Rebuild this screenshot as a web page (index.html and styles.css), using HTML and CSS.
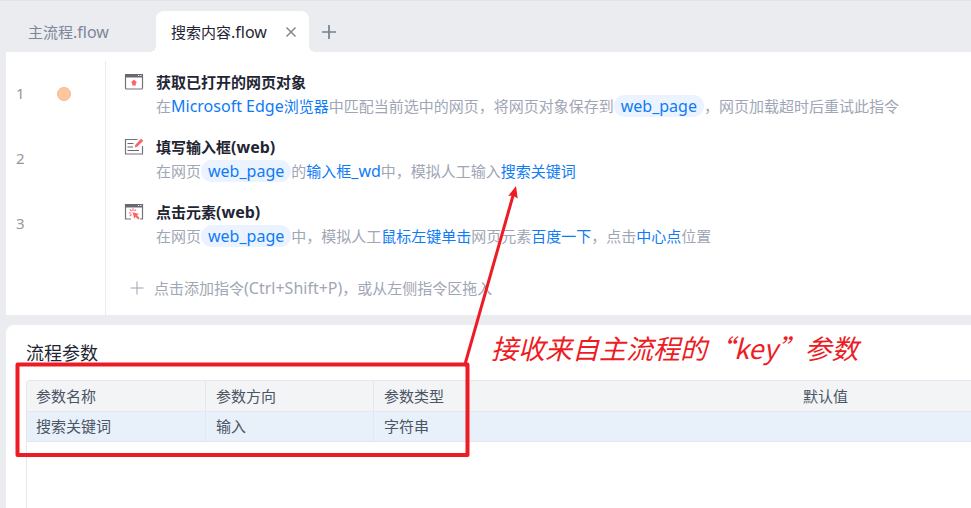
FILE: index.html
```html
<!DOCTYPE html>
<html lang="zh-CN">
<head>
  <meta charset="UTF-8" />
  <meta name="viewport" content="width=device-width, initial-scale=1.0" />
  <title>搜索内容.flow</title>
  <link rel="stylesheet" href="styles.css">
</head>
<body>

  <!-- Tabs -->
  <nav class="tabs">
    <a class="tab" href="#main">主流程<span class="latin">.flow</span></a>
    <div class="tab active">
      <a href="#search">搜索内容<span class="latin">.flow</span></a>
      <button type="button" class="icon-button" aria-label="关闭">
        <svg width="12" height="12" viewBox="0 0 12 12"><path d="M1.5 1.5L10.5 10.5M10.5 1.5L1.5 10.5" stroke="#7c7f86" stroke-width="1.4" /></svg>
      </button>
    </div>
    <button type="button" class="icon-button add-tab" aria-label="新建">
      <svg width="16" height="16" viewBox="0 0 16 16"><path d="M8 1V15M1 8H15" stroke="#747f91" stroke-width="1.7" /></svg>
    </button>
  </nav>

  <!-- Flow steps -->
  <main class="editor">
    <div class="gutter">
      <div class="line"><span class="number">1</span><span class="breakpoint"></span></div>
      <div class="line"><span class="number">2</span></div>
      <div class="line"><span class="number">3</span></div>
    </div>

    <div class="steps">
      <section class="step">
        <svg class="step-icon" width="20" height="18" viewBox="0 0 20 18">
          <rect x="1.5" y="1.5" width="17" height="14.5" rx="1" fill="#fff" stroke="#74747c" stroke-width="1.2" />
          <path d="M1 1H19V4.5H1Z" fill="#686871" />
          <path d="M14 2.5H15.2M16.3 2.5H17.5" stroke="#fff" stroke-width="1.2" />
          <path d="M10 6.5L13.2 9.7H11.8V12.6H8.2V9.7H6.8Z" fill="#f96468" />
        </svg>
        <div class="step-text">
          <h2>获取已打开的网页对象</h2>
          <p>在<a href="#browser"><span class="latin">Microsoft Edge</span>浏览器</a>中匹配当前选中的网页，将网页对象保存到<a class="variable latin" href="#web_page">web_page</a>，网页加载超时后重试此指令</p>
        </div>
      </section>

      <section class="step">
        <svg class="step-icon" width="20" height="18" viewBox="0 0 20 18">
          <path d="M13.5 1.5H1.5V16H18.5V8" fill="none" stroke="#74747c" stroke-width="1.2" />
          <path d="M3.5 5.5H9.5M3.5 9H9M3.5 12.5H15" stroke="#686871" stroke-width="1.2" />
          <path d="M17 0.8L19.3 2.7L13.5 8.6L10.8 9.5L11.4 6.8Z" fill="#f96468" />
        </svg>
        <div class="step-text">
          <h2>填写输入框<span class="latin">(web)</span></h2>
          <p>在网页<a class="variable latin" href="#web_page">web_page</a>的<a href="#input">输入框<span class="latin">_wd</span></a>中，模拟人工输入<a href="#keyword">搜索关键词</a></p>
        </div>
      </section>

      <section class="step">
        <svg class="step-icon" width="20" height="18" viewBox="0 0 20 18">
          <path d="M7 16H1.5V1.5H18.5V16H16" fill="none" stroke="#74747c" stroke-width="1.2" />
          <path d="M1 1H19V4.5H1Z" fill="#686871" />
          <path d="M14 2.5H15.2M16.3 2.5H17.5" stroke="#fff" stroke-width="1.2" />
          <path d="M9 5.3V8M5.8 6.5L7.5 8.2M4.8 10H7.3M5.8 13L7.5 11.5M12 6.5L10.5 8.2" stroke="#f96468" stroke-width="1.1" />
          <path d="M8.5 9.2L15 11L13 12.3L15.7 15L14.2 16.4L11.5 13.8L10.3 15.8Z" fill="#f96468" />
        </svg>
        <div class="step-text">
          <h2>点击元素<span class="latin">(web)</span></h2>
          <p>在网页<a class="variable latin" href="#web_page">web_page</a>中，模拟人工<a href="#click">鼠标左键单击</a>网页元素<a href="#element">百度一下</a>，点击<a href="#center">中心点</a>位置</p>
        </div>
      </section>

      <button type="button" class="add-step">
        <svg width="14" height="14" viewBox="0 0 14 14"><path d="M7 0.5V13.5M0.5 7H13.5" stroke="#9aa1b0" /></svg>
        <span>点击添加指令<span class="latin">(Ctrl+Shift+P)</span>，或从左侧指令区拖入</span>
      </button>
    </div>
  </main>

  <!-- Flow parameters -->
  <section class="params">
    <h2>流程参数</h2>
    <div class="table-wrap">
      <table>
        <colgroup>
          <col class="col-name">
          <col class="col-direction">
          <col class="col-type">
          <col>
        </colgroup>
        <thead>
          <tr><th>参数名称</th><th>参数方向</th><th>参数类型</th><th>默认值</th></tr>
        </thead>
        <tbody>
          <tr><td>搜索关键词</td><td>输入</td><td>字符串</td><td></td></tr>
        </tbody>
      </table>
    </div>
  </section>

  <!-- Red marks over the page -->
  <svg class="marks" width="540" height="470" viewBox="0 0 540 470" aria-hidden="true">
    <rect x="17.5" y="364.5" width="450" height="90.5" fill="none" stroke="#ed1c24" stroke-width="4" stroke-linejoin="round" />
    <path d="M464.5 366L513.5 194" stroke="#ed1c24" stroke-width="3" />
    <path d="M516 186L517.7 198.5L513 195.6L508.2 196Z" fill="#ed1c24" />
  </svg>
  <p class="note">接收来自主流程的“key”参数</p>

</body>
</html>
```
FILE: styles.css
```css
* {
  box-sizing: border-box;
}

body {
  margin: 0;
  min-height: 100vh;
  display: flex;
  flex-direction: column;
  position: relative;
  padding-left: 6px;
  background-color: #ebecf0;
  border-top: 1px solid #e3e4e9;
  font-family: "Noto Sans", "Noto Sans CJK SC", sans-serif;
  font-size: 15px;
  color: #1f2533;
}

h2,
p {
  margin: 0;
}

a {
  color: #0f7bf5;
  text-decoration: none;
}

button {
  border: none;
  padding: 0;
  background: none;
  font: inherit;
  cursor: pointer;
}

.latin {
  font-size: 16px;
}

/* Tabs */
.tabs {
  display: flex;
  height: 51px;
  padding-top: 10px;
}

.tab {
  display: flex;
  align-items: center;
  width: 150px;
  padding-left: 22px;
  line-height: 20px;
  color: #7d8799;
}

.tab.active {
  position: relative;
  justify-content: space-between;
  width: 153px;
  padding: 0 12px 0 15px;
  background: white;
  border-radius: 8px 8px 0 0;
}

.tab.active a {
  color: #1f2533;
}

/* curved feet of the active tab */
.tab.active::before,
.tab.active::after {
  content: "";
  position: absolute;
  bottom: 0;
  width: 6px;
  height: 6px;
}

.tab.active::before {
  left: -6px;
  background: radial-gradient(circle at 0 0, transparent 6px, white 6px);
}

.tab.active::after {
  right: -6px;
  background: radial-gradient(circle at 100% 0, transparent 6px, white 6px);
}

.icon-button {
  display: flex;
  align-items: center;
}

.add-tab {
  margin-left: 12px;
}

/* Flow steps */
.editor {
  display: flex;
  height: 263px;
  padding-top: 9px;
  background: white;
}

.gutter {
  width: 100px;
  border-right: 1px solid #ebecf0;
}

.line {
  display: flex;
  align-items: center;
  height: 65px;
  padding-left: 10px;
  color: #9298a3;
}

.number {
  width: 41px;
  padding-bottom: 2px;
}

.breakpoint {
  width: 14px;
  height: 14px;
  border: 1px solid #f3b88f;
  border-radius: 50%;
  background: #ffc59c;
}

.steps {
  flex: 1;
  padding-left: 18px;
}

.step {
  display: flex;
  gap: 12px;
  height: 65px;
  padding-top: 9px;
}

.step-icon {
  margin-top: 3px;
}

.step h2 {
  font-size: 15px;
  line-height: 24px;
}

.step p {
  line-height: 24px;
  white-space: nowrap;
  color: #9fa6b5;
}

.variable {
  display: inline-block;
  padding: 0 7px;
  border-radius: 11px;
  background: #eaf3ff;
  line-height: 22px;
}

.add-step {
  display: flex;
  align-items: center;
  gap: 10px;
  margin-top: 20px;
  padding-left: 6px;
  line-height: 24px;
  color: #9fa6b5;
}

/* Flow parameters */
.params {
  flex: 1;
  display: flex;
  flex-direction: column;
  margin-top: 10px;
  padding: 16px 0 0 20px;
  background: white;
  border-radius: 8px 0 0 0;
}

.params h2 {
  margin-bottom: 15px;
  font-size: 18px;
  font-weight: normal;
  line-height: 24px;
}

.table-wrap {
  flex: 1;
  overflow: hidden;
  border: 1px solid #e4e7ed;
  border-width: 1px 0 0 1px;
  border-radius: 4px 0 0 0;
}

table {
  width: 100%;
  table-layout: fixed;
  border-collapse: separate;
  border-spacing: 0;
}

.col-name {
  width: 179px;
}

.col-direction {
  width: 168px;
}

.col-type {
  width: 419px;
}

th,
td {
  height: 30px;
  padding: 0 10px;
  border-right: 1px solid #e4e7ed;
  border-bottom: 1px solid #e4e7ed;
  text-align: left;
  font-weight: normal;
  line-height: 29px;
  color: #4b5565;
}

th:first-child,
td:first-child {
  padding-left: 9px;
}

th:nth-child(n + 3),
td:nth-child(n + 3) {
  border-right: none;
}

th {
  height: 31px;
  background: #f3f4f6;
}

td {
  background: #e8f0fa;
}

/* Red marks */
.marks {
  position: absolute;
  top: -1px;
  left: 0;
  pointer-events: none;
}

.note {
  position: absolute;
  top: 327px;
  left: 491px;
  font-family: "Noto Sans CJK SC", sans-serif;
  font-size: 27px;
  font-style: italic;
  line-height: 40px;
  white-space: nowrap;
  color: #ed1c24;
}
```
